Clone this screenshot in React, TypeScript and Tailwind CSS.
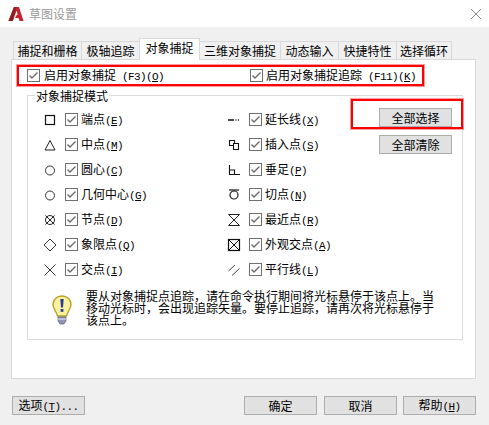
const tabs = [
  { label: "捕捉和栅格", width: "w-[69px] border-l" },
  { label: "极轴追踪", width: "w-[58px] border-l-0" },
  { label: "对象捕捉", width: "w-[61px] -ml-px", active: true },
  { label: "三维对象捕捉", width: "w-[81px] border-l-0" },
  { label: "动态输入", width: "w-[58px] border-l-0" },
  { label: "快捷特性", width: "w-[58px] border-l-0" },
  { label: "选择循环", width: "w-[55px] border-l-0" },
];

function Latin({ children }: { children: React.ReactNode }) {
  return <span className="font-['Liberation_Mono',monospace] text-[11px] tracking-[-0.6px] whitespace-pre">{children}</span>;
}

function Key({ before, k, after = ")" }: { before?: string; k: string; after?: string }) {
  return (
    <Latin>
      {before ?? "("}
      <span className="underline">{k}</span>
      {after}
    </Latin>
  );
}

function Check() {
  return (
    <svg width="13" height="13" viewBox="0 0 13 13" className="shrink-0">
      <rect x="0.5" y="0.5" width="12" height="12" fill="#fff" stroke="#707070" />
      <path d="M2.5 6.5 L5 9 L10.5 3.5" fill="none" stroke="#6a6a6a" strokeWidth="1.4" />
    </svg>
  );
}

const icons: Record<string, React.ReactNode> = {
  end: <rect x="1.5" y="1.5" width="9" height="9" fill="none" stroke="#111" strokeWidth="1.2" />,
  mid: <path d="M6 1.5 L11 11 H1 Z" fill="none" stroke="#222" />,
  center: <circle cx="6" cy="6.5" r="4.5" fill="none" stroke="#333" />,
  node: (
    <g fill="none" stroke="#222">
      <circle cx="6" cy="6" r="4.5" />
      <path d="M1.5 1.5 L10.5 10.5 M10.5 1.5 L1.5 10.5" />
    </g>
  ),
  quad: <path d="M6 0 L12 6 L6 12 L0 6 Z" fill="none" stroke="#333" />,
  inter: <path d="M0.5 0.5 L11.5 11.5 M11.5 0.5 L0.5 11.5" fill="none" stroke="#333" />,
  ext: <path d="M0 6 H6 M7.5 6 H8.5 M10 6 H11" fill="none" stroke="#111" strokeWidth="1.4" />,
  insert: <path d="M1.5 1.5 H6.5 V4.5 H10.5 V10.5 H5.5 V6.5 H1.5 Z M6.5 4.5 H5.5 V6.5" fill="none" stroke="#111" strokeWidth="1.1" />,
  perp: <path d="M1.5 1 V10.5 H12 M1.5 6 H6.5 V10.5" fill="none" stroke="#111" strokeWidth="1.1" />,
  tan: (
    <g fill="none" stroke="#222">
      <path d="M1 1 H11" strokeWidth="1.3" />
      <circle cx="6" cy="6" r="4" strokeWidth="1.2" />
    </g>
  ),
  near: <path d="M0.5 0.5 H11.5 L0.5 11.5 H11.5 Z" fill="none" stroke="#222" />,
  app: (
    <g fill="none" stroke="#111">
      <rect x="0.5" y="0.5" width="11" height="11" strokeWidth="1.2" />
      <path d="M0.5 0.5 L11.5 11.5 M11.5 0.5 L0.5 11.5" />
    </g>
  ),
  par: <path d="M0.5 7 L7 1 M4 11.5 L11.5 4.5" fill="none" stroke="#444" />,
};

const modes = [
  { icon: "end", label: "端点", k: "E" },
  { icon: "ext", label: "延长线", k: "X" },
  { icon: "mid", label: "中点", k: "M" },
  { icon: "insert", label: "插入点", k: "S" },
  { icon: "center", label: "圆心", k: "C" },
  { icon: "perp", label: "垂足", k: "P" },
  { icon: "center", label: "几何中心", k: "G" },
  { icon: "tan", label: "切点", k: "N" },
  { icon: "node", label: "节点", k: "D" },
  { icon: "near", label: "最近点", k: "R" },
  { icon: "quad", label: "象限点", k: "Q" },
  { icon: "app", label: "外观交点", k: "A" },
  { icon: "inter", label: "交点", k: "I" },
  { icon: "par", label: "平行线", k: "L" },
];

function Btn({ children, className = "" }: { children: React.ReactNode; className?: string }) {
  return (
    <button className={`w-[73px] h-[19px] bg-[#e1e1e1] border-[1.5px] border-[#adadad] flex items-center justify-center leading-none text-black ${className}`}>
      <span>{children}</span>
    </button>
  );
}

export default function App() {
  return (
    <div className="w-[489px] h-[425px] overflow-hidden bg-[#f0f0f0] text-[12px] text-black font-['Noto_Sans_CJK_SC',sans-serif]">
      <div className="h-[27px] bg-white flex items-center pl-[8px] pr-[8px]">
        <svg width="16" height="16" viewBox="0 0 16 16">
          <path d="M6 1 H11 L15.5 15 H11.5 L10.6 12 H7 L8.8 8.8 H9.7 L8.6 4.6 L4.8 15 H0.5 Z" fill="#c8202c" />
          <path d="M6 1 H8.2 L4.8 15 H0.5 Z" fill="#8f1c22" />
        </svg>
        <span className="ml-[5px] text-[#9a9a9a]">草图设置</span>
        <svg width="12" height="12" viewBox="0 0 12 12" className="ml-auto mr-[-1px]">
          <path d="M1 1 L11 11 M11 1 L1 11" stroke="#8a8a8a" fill="none" />
        </svg>
      </div>

      <div className="flex items-end h-[21px] mt-[11px] ml-[13px]">
        {tabs.map((t) => (
          <div
            key={t.label}
            className={`${t.width} flex items-center justify-center border-t border-r border-[#d9d9d9] leading-none ${
              t.active ? "h-[22px] -mb-px bg-white border-l relative z-10 pb-[3px]" : "h-[18px] bg-[#f0f0f0]"
            }`}
          >
            {t.label}
          </div>
        ))}
      </div>

      <div className="ml-[11px] w-[465px] h-[320px] bg-white border border-[#d9d9d9]">
        <div className="mt-[5px] ml-[5px] w-[407px] h-[21px] border-2 border-[#f00] shadow-[0_0_0_1px_#ff9c9c] flex items-center pl-[8px]">
          <div className="w-[223px] flex items-center gap-[4px]">
            <Check />
            <span>
              启用对象捕捉<Key before=" (F3)(" k="O" />
            </span>
          </div>
          <div className="flex items-center gap-[3px]">
            <Check />
            <span>
              启用对象捕捉追踪<Key before=" (F11)(" k="K" />
            </span>
          </div>
        </div>

        <div className="relative mt-[9px] ml-[15px] w-[436px] h-[245px] border border-[#dcdcdc] pt-[11px]">
          <span className="absolute left-[7px] top-[-7px] bg-white px-px leading-[14px]">对象捕捉模式</span>
          <div className="absolute left-[323px] top-[3px] w-[112px] h-[30px] border-2 border-[#f00] shadow-[0_0_0_1px_#ff9c9c]" />

          <div className="flex">
            <div className="w-[351px] pl-[16px] grid grid-cols-[184px_151px] auto-rows-[25px]">
              {modes.map((m) => (
                <div key={m.label} className="flex items-center">
                  <svg width="12" height="12" viewBox="0 0 12 12" className="mr-[9px] shrink-0 overflow-visible">
                    {icons[m.icon]}
                  </svg>
                  <Check />
                  <span className="ml-[3px]">
                    {m.label}
                    <Key k={m.k} />
                  </span>
                </div>
              ))}
            </div>
            <div className="flex flex-col gap-[8px] pt-px relative">
              <Btn>全部选择</Btn>
              <Btn>全部清除</Btn>
            </div>
          </div>

          <div className="flex mt-[11px] pl-[24px]">
            <svg width="20" height="30" viewBox="0 0 20 30" className="mt-[2px] shrink-0">
              <path d="M10 1 C4.5 1 1 4.8 1 9.5 C1 13.5 4 16 5.6 21 H14.4 C16 16 19 13.5 19 9.5 C19 4.8 15.5 1 10 1 Z" fill="#fbf0a0" stroke="#b7a02c" strokeWidth="1.4" />
              <path d="M8.3 4 H11.7 L11 12.5 H9 Z" fill="#22408f" />
              <rect x="8.6" y="14" width="2.8" height="2.8" fill="#22408f" />
              <path d="M6 22 H14 V26 L12 29 H8 L6 26 Z" fill="#8f94b8" stroke="#4c5070" strokeWidth="0.6" />
              <path d="M6 24 H14" stroke="#e8e8f0" />
            </svg>
            <p className="ml-[14px] mt-[-3px] leading-[12px] whitespace-nowrap">
              要从对象捕捉点追踪，请在命令执行期间将光标悬停于该点上。当
              <br />
              移动光标时，会出现追踪矢量。要停止追踪，请再次将光标悬停于
              <br />
              该点上。
            </p>
          </div>
        </div>
      </div>

      <div className="flex mt-[17px] ml-[12px]">
        <Btn>
          选项<Key k="T" after=")..." />
        </Btn>
        <Btn className="ml-[159px]">确定</Btn>
        <Btn className="ml-[7px]">取消</Btn>
        <Btn className="ml-[6px]">
          帮助<Key k="H" />
        </Btn>
      </div>
    </div>
  );
}
